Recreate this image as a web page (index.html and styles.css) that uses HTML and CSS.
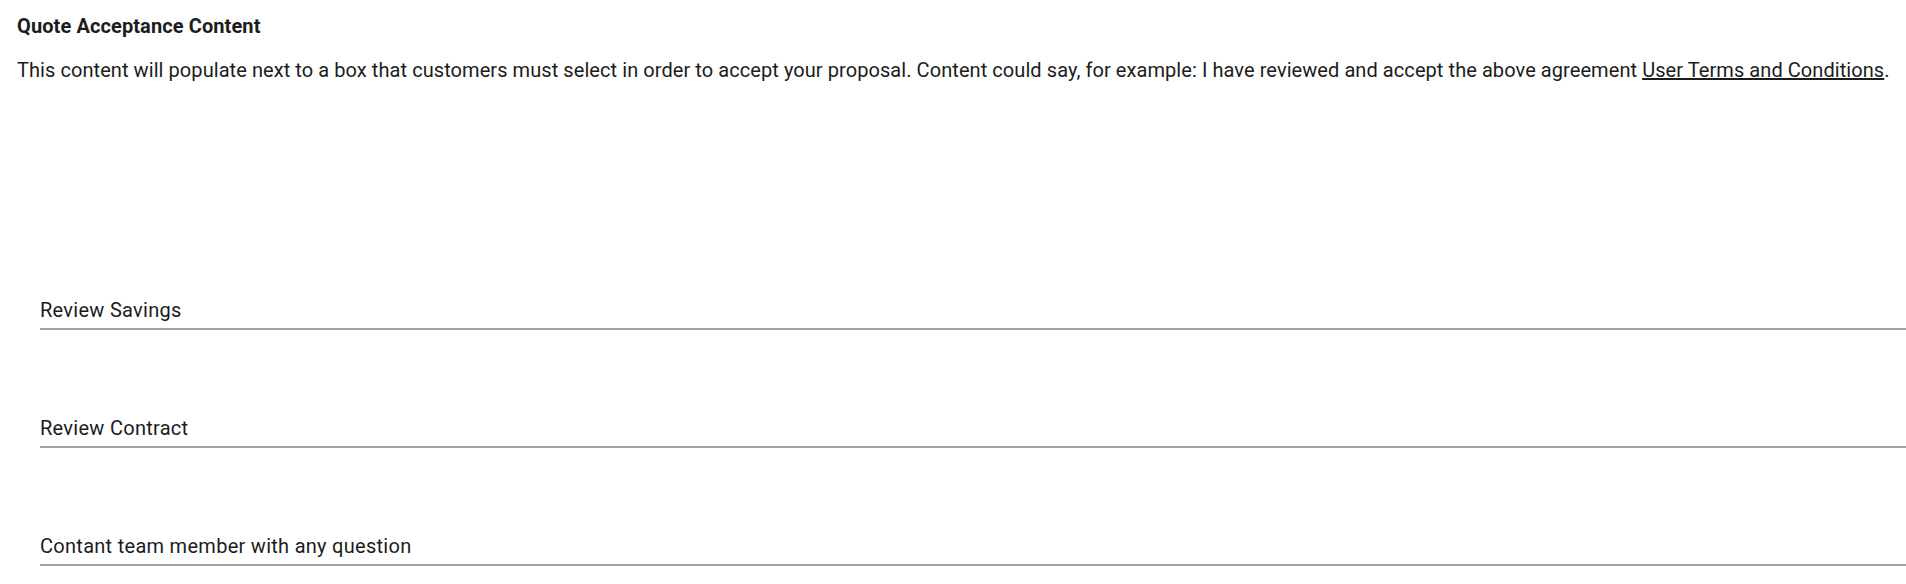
FILE: index.html
```html
<!DOCTYPE html>
<html lang="en">
<head>
<meta charset="utf-8">
<title>Quote Acceptance Content</title>
<link rel="stylesheet" href="styles.css">
</head>
<body>
<div class="page">
  <section class="intro">
    <h2 class="title">Quote Acceptance Content</h2>
    <p class="desc">This content will populate next to a box that customers must select in order to accept your proposal. Content could say, for example: I have reviewed and accept the above agreement <a class="link" href="#">User Terms and Conditions</a>.</p>
  </section>
  <div class="fields">
    <div class="field"><div class="field-value">Review Savings</div></div>
    <div class="field"><div class="field-value">Review Contract</div></div>
    <div class="field"><div class="field-value">Contant team member with any question</div></div>
  </div>
</div>
</body>
</html>
```
FILE: styles.css
```css
html, body {
  margin: 0;
  padding: 0;
  background: #ffffff;
}
body {
  font-family: Roboto, "Liberation Sans", sans-serif;
  color: #1a1a1a;
  width: 1906px;
  height: 584px;
  overflow: hidden;
}
.page {
  padding: 13px 0 0 17px;
}
.title {
  margin: 0;
  font-size: 20px;
  font-weight: 700;
  line-height: 26px;
  letter-spacing: 0.1px;
  color: #1c1c1c;
}
.desc {
  margin: 18px 0 0 0;
  font-size: 20px;
  font-weight: 400;
  line-height: 26px;
  letter-spacing: 0.07px;
  color: #1c1c1c;
}
.link {
  color: #1c1c1c;
  text-decoration: underline;
}
.fields {
  margin-top: 215px;
  padding-left: 23px;
  display: flex;
  flex-direction: column;
  gap: 86px;
}
.field {
  border-bottom: 2px solid #a0a0a0;
}
.field-value {
  font-size: 20px;
  line-height: 24px;
  letter-spacing: 0.28px;
  padding-bottom: 6px;
  color: #1c1c1c;
}
```
